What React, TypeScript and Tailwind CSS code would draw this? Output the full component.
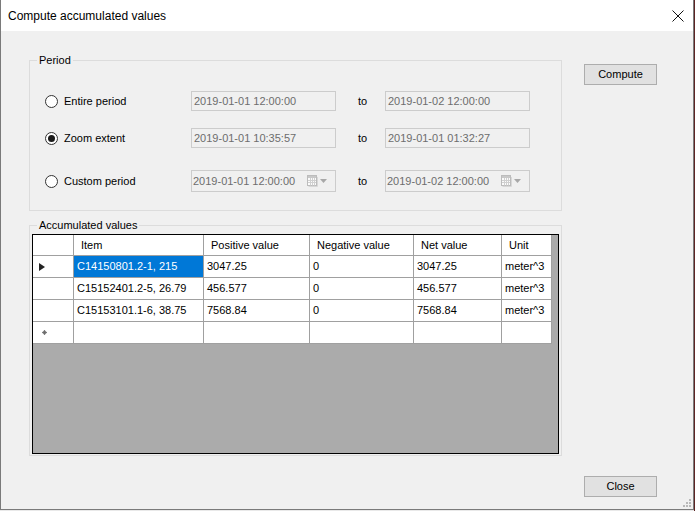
import React from "react";

const rows = [
  ["C14150801.2-1, 215", "3047.25", "0", "3047.25", "meter^3"],
  ["C15152401.2-5, 26.79", "456.577", "0", "456.577", "meter^3"],
  ["C15153101.1-6, 38.75", "7568.84", "0", "7568.84", "meter^3"],
];

function Radio({ checked, label }: { checked?: boolean; label: string }) {
  return (
    <div className="flex items-center w-[146px]">
      <div className="w-[13px] h-[13px] rounded-full border border-[#333333] bg-white flex items-center justify-center shrink-0">
        {checked && <div className="w-[7px] h-[7px] rounded-full bg-[#1a1a1a]" />}
      </div>
      <span className="ml-[6px] text-[11px] text-black leading-none">{label}</span>
    </div>
  );
}

function TextBox({ value }: { value: string }) {
  return (
    <div className="w-[145px] h-[20px] border border-[#cccccc] bg-[#f0f0f0] flex items-center pl-[2px] text-[11px] text-[#6d6d6d]">
      {value}
    </div>
  );
}

function Picker({ value }: { value: string }) {
  return (
    <div className="w-[145px] h-[22px] border border-[#cccccc] bg-[#f0f0f0] flex items-center pl-[1px] pr-[7px] text-[11px] text-[#6d6d6d]">
      <span className="flex-1">{value}</span>
      <svg width="11" height="12" viewBox="0 0 11 12" className="shrink-0">
        <rect x="0.5" y="0.5" width="9" height="10" fill="#fbfbfb" stroke="#bcbcbc" />
        <rect x="1" y="1" width="8" height="2" fill="#c8c8c8" />
        <path d="M1 5.5H9M1 7.5H9M3.5 3V10.5M5.5 3V10.5M7.5 3V10.5" stroke="#d0d0d0" strokeWidth="1" />
        <path d="M10.5 2V11.5H1.5" stroke="#d8d8d8" fill="none" />
      </svg>
      <svg width="8" height="5" viewBox="0 0 8 5" className="ml-[2px] shrink-0">
        <path d="M0 0H7L3.5 4Z" fill="#a8a8a8" />
      </svg>
    </div>
  );
}

function Button({ label }: { label: string }) {
  return (
    <div className="w-[73px] h-[21px] border border-[#adadad] bg-[#e1e1e1] flex items-center justify-center text-[11px] text-black">
      {label}
    </div>
  );
}

const colW = ["w-[41px]", "w-[130px]", "w-[106px]", "w-[104px]", "w-[88px]", "w-[50px]"];

export default function App() {
  return (
    <div className="w-[695px] h-[511px] flex flex-col bg-[#e9e9e9] font-['Liberation_Sans',Arial,sans-serif] overflow-hidden">
      <div className="flex flex-1">
        <div className="w-[694px] h-[510px] flex flex-col border-l border-r border-b border-[#7a7a7a]">
          {/* Title bar */}
          <div className="h-[31px] bg-white flex items-center pl-[7px] pr-[9px] shrink-0">
            <span className="text-[12px] text-black flex-1">Compute accumulated values</span>
            <svg width="12" height="12" viewBox="0 0 12 12">
              <path d="M0.5 0.5L11.5 11.5M11.5 0.5L0.5 11.5" stroke="#111" strokeWidth="1" />
            </svg>
          </div>
          {/* Content */}
          <div className="flex-1 bg-[#f0f0f0] flex pl-[28px] pt-[29px] pb-[12px] relative">
            <div className="flex flex-col">
              {/* Period group */}
              <div className="relative w-[533px] h-[151px] border border-[#dcdcdc] pl-[15px] pt-[30px]">
                <span className="absolute left-[7px] top-[-8px] bg-[#f0f0f0] px-[2px] text-[11px] text-black leading-[14px]">
                  Period
                </span>
                <div className="flex items-center h-[20px]">
                  <Radio label="Entire period" />
                  <TextBox value="2019-01-01 12:00:00" />
                  <span className="w-[49px] pl-[22px] text-[11px] text-black">to</span>
                  <TextBox value="2019-01-02 12:00:00" />
                </div>
                <div className="flex items-center h-[20px] mt-[17px]">
                  <Radio checked label="Zoom extent" />
                  <TextBox value="2019-01-01 10:35:57" />
                  <span className="w-[49px] pl-[22px] text-[11px] text-black">to</span>
                  <TextBox value="2019-01-01 01:32:27" />
                </div>
                <div className="flex items-center h-[22px] mt-[22px]">
                  <Radio label="Custom period" />
                  <Picker value="2019-01-01 12:00:00" />
                  <span className="w-[49px] pl-[22px] text-[11px] text-black">to</span>
                  <Picker value="2019-01-02 12:00:00" />
                </div>
              </div>
              {/* Accumulated group */}
              <div className="relative w-[533px] h-[231px] mt-[14px] border border-[#dcdcdc] pl-[2px] pt-[8px]">
                <span className="absolute left-[7px] top-[-8px] bg-[#f0f0f0] px-[2px] text-[11px] text-black leading-[14px]">
                  Accumulated values
                </span>
                <div className="w-[527px] h-[220px] border border-black bg-[#ababab] flex flex-col">
                  {/* header */}
                  <div className="flex h-[21px]">
                    {["", "Item", "Positive value", "Negative value", "Net value", "Unit"].map((h, i) => (
                      <div
                        key={i}
                        className={`${colW[i]} h-full bg-white border-r border-b border-[#a0a0a0] flex items-center pl-[7px] text-[11px] text-black`}
                      >
                        {h}
                      </div>
                    ))}
                  </div>
                  {rows.map((r, ri) => (
                    <div key={ri} className="flex h-[22px]">
                      <div className="w-[41px] h-full bg-white border-r border-b border-[#a0a0a0] flex items-center pl-[6px]">
                        {ri === 0 && (
                          <svg width="6" height="8" viewBox="0 0 6 8">
                            <path d="M0 0L6 4L0 8Z" fill="#222" />
                          </svg>
                        )}
                      </div>
                      {r.map((c, ci) => (
                        <div
                          key={ci}
                          className={`${colW[ci + 1]} h-full border-r border-b border-[#a0a0a0] flex items-center pl-[3px] text-[11px] ${
                            ri === 0 && ci === 0 ? "bg-[#0078d7] text-white" : "bg-white text-black"
                          }`}
                        >
                          {c}
                        </div>
                      ))}
                    </div>
                  ))}
                  <div className="flex h-[22px]">
                    <div className="w-[41px] h-full bg-white border-r border-b border-[#a0a0a0] flex items-center pl-[9px]">
                      <svg width="5" height="5" viewBox="0 0 5 5">
                        <circle cx="2.5" cy="2.5" r="2" fill="#8a8a8a" />
                        <path d="M2.5 0V5M0 2.5H5" stroke="#6a6a6a" strokeWidth="0.8" />
                      </svg>
                    </div>
                    {[1, 2, 3, 4, 5].map((i) => (
                      <div key={i} className={`${colW[i]} h-full bg-white border-r border-b border-[#a0a0a0]`} />
                    ))}
                  </div>
                </div>
              </div>
            </div>
            {/* Right column */}
            <div className="flex flex-col justify-between ml-[22px] pt-[4px]">
              <Button label="Compute" />
              <Button label="Close" />
            </div>
            {/* size grip */}
            <svg width="9" height="9" viewBox="0 0 9 9" className="absolute right-[1px] bottom-[1px]">
              <rect x="6" y="0" width="2" height="2" fill="#b8b8b8" />
              <rect x="3" y="3" width="2" height="2" fill="#b8b8b8" />
              <rect x="6" y="3" width="2" height="2" fill="#b8b8b8" />
              <rect x="0" y="6" width="2" height="2" fill="#b8b8b8" />
              <rect x="3" y="6" width="2" height="2" fill="#b8b8b8" />
              <rect x="6" y="6" width="2" height="2" fill="#b8b8b8" />
            </svg>
          </div>
        </div>
        <div className="w-[1px] bg-[#5c2424]" />
      </div>
    </div>
  );
}
